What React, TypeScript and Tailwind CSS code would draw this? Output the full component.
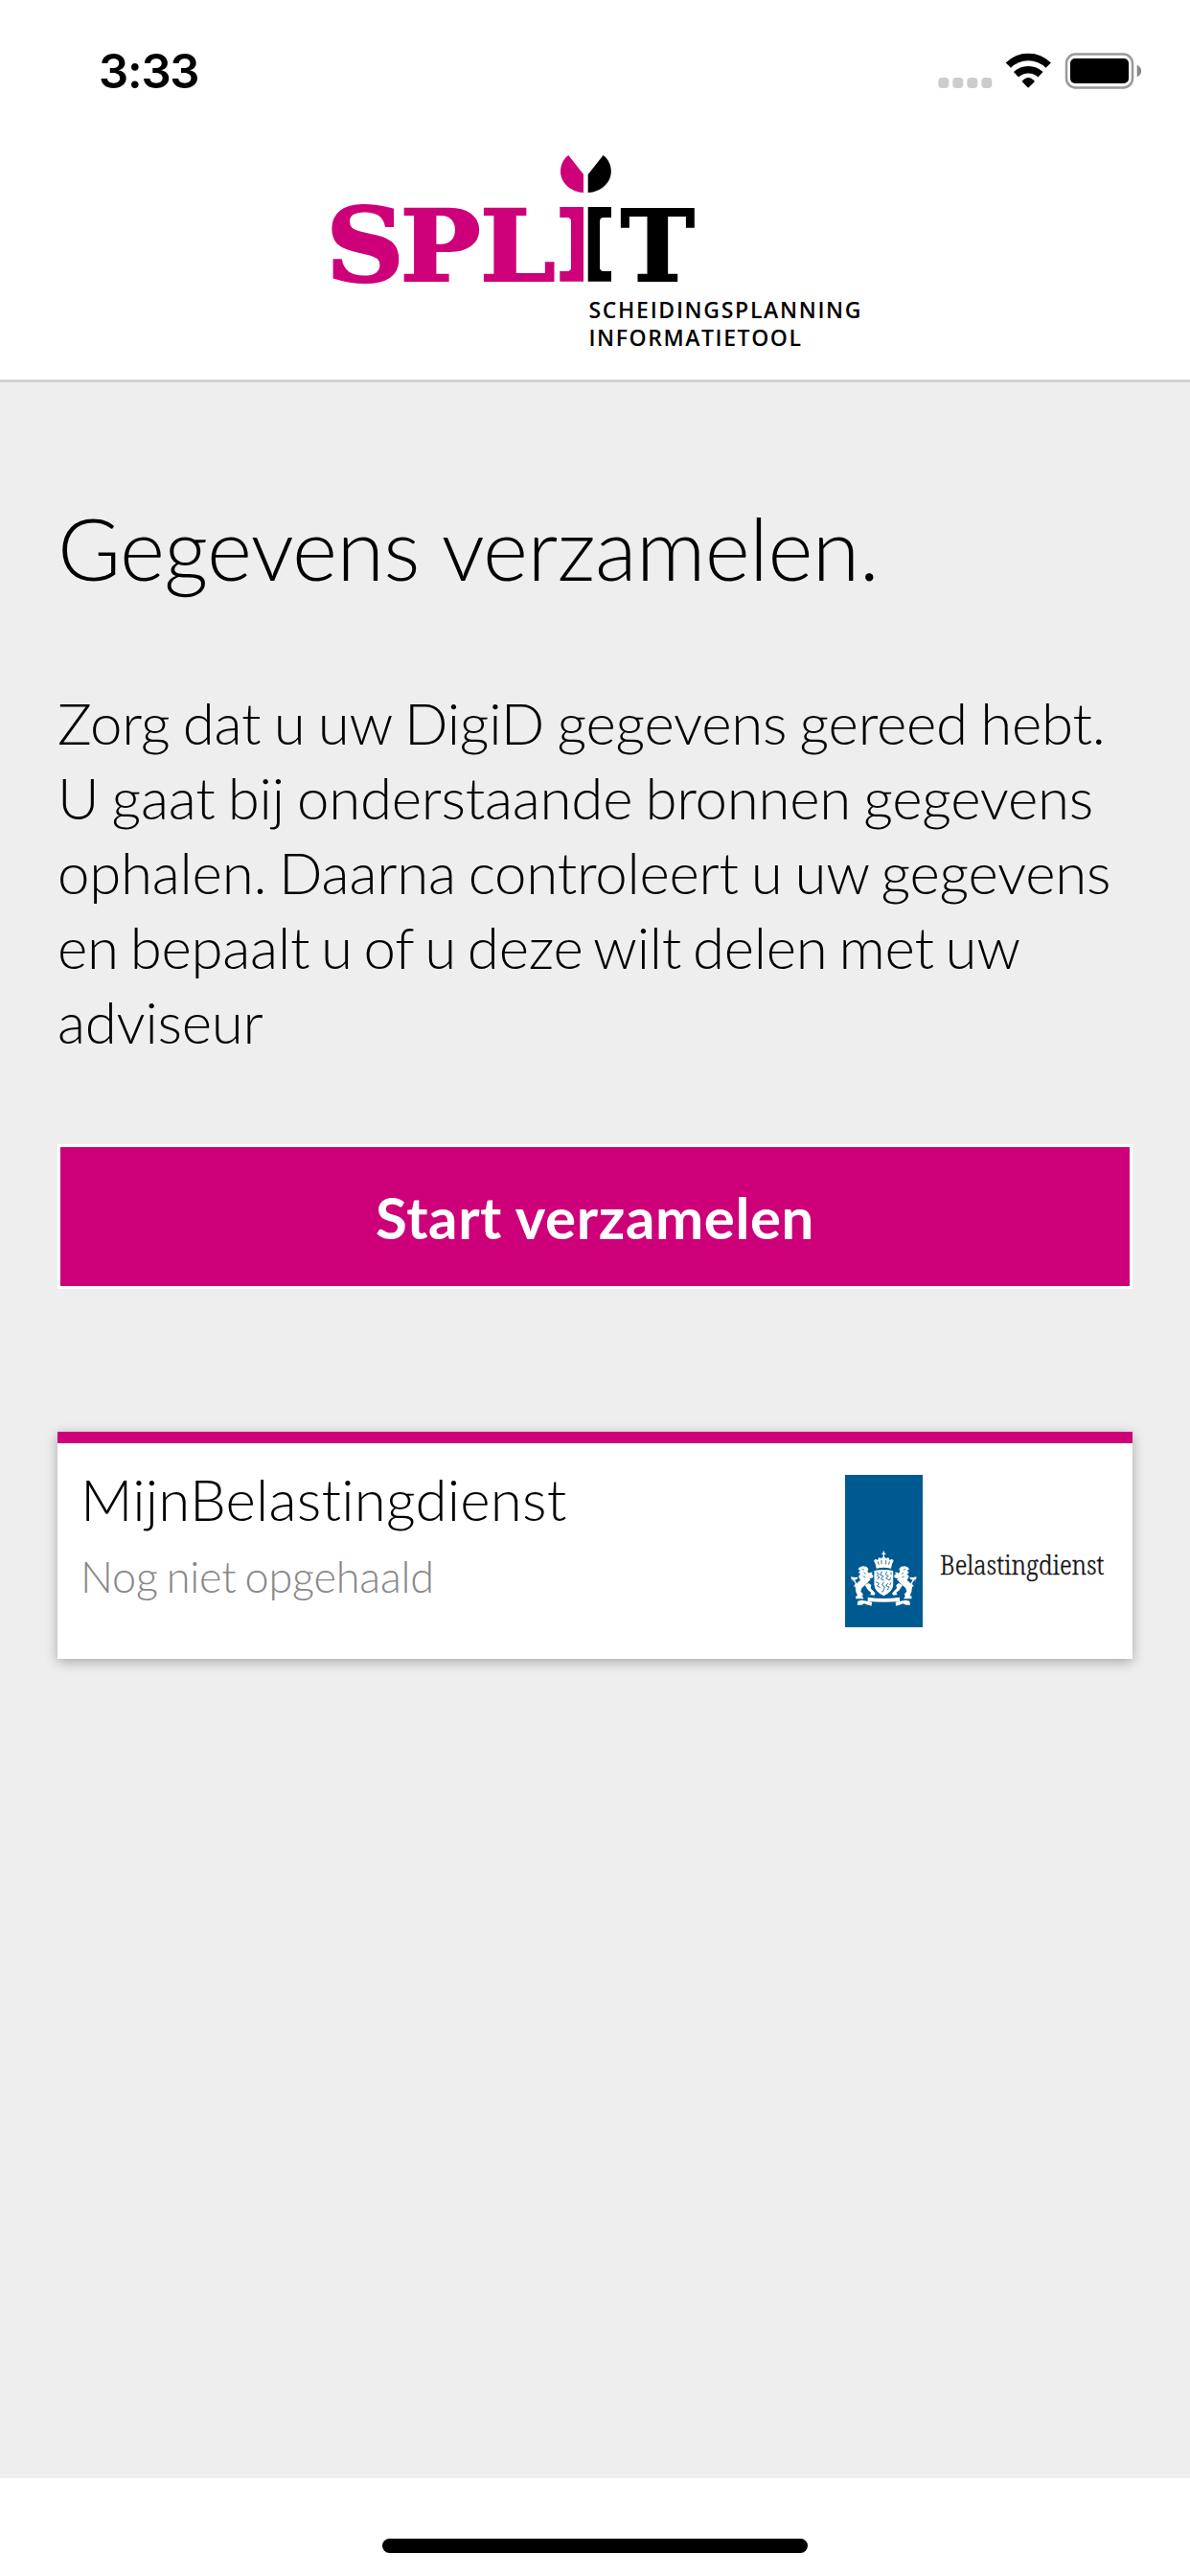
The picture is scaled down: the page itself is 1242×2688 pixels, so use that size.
import React from "react";

function StatusBar() {
  return (
    <div className="flex h-[132px] items-start justify-between pr-[50px] pl-[103px]">
      <div className="mt-[47px] font-['Inter',sans-serif] text-[49px] leading-[56px] font-semibold tracking-[-1.2px]">
        3:33
      </div>
      <svg className="mt-[48px]" width="217" height="52" viewBox="975 48 217 52">
        <g fill="#ccc">
          <rect x="979.3" y="81" width="11" height="11" rx="4" />
          <rect x="994.3" y="81" width="11" height="11" rx="4" />
          <rect x="1009.3" y="81" width="11" height="11" rx="4" />
          <rect x="1024.3" y="81" width="11" height="11" rx="4" />
        </g>
        <g fill="none" stroke="#000" strokeWidth="7.5">
          <path d="M1052.3 68.2A29.5 29.5 0 0 1 1094.2 68.2" />
          <path d="M1060.5 77.8A18.5 18.5 0 0 1 1086 77.8" />
        </g>
        <path d="M1066.5 85Q1073.2 77 1080 85L1073.2 91.7Z" />
        <rect x="1113" y="56.5" width="69" height="35" rx="9.5" fill="none" stroke="#999" strokeWidth="2.5" />
        <rect x="1117" y="61" width="61" height="26" rx="5" />
        <path d="M1186.7 67.7Q1191.2 70 1191.2 74T1186.7 80.3Z" fill="#888" />
      </svg>
    </div>
  );
}

function SplitLogo() {
  return (
    <svg width="600" height="264" viewBox="330 132 600 264">
      <g fill="#cd0079">
        <path d="M593.3 162L609 182V201C596 200.5 585 191 585 179C585 172 588 166 593.3 162Z" />
        <path d="M584.3 216H609V293.7H584.3V283H592Q596 283 596 279V231Q596 227 592 227H584.3Z" />
      </g>
      <path d="M629.6 162L613.7 182V201C626.7 200.5 637.8 191 637.8 179C637.8 172 634.8 166 629.6 162Z" />
      <path d="M638 216H613.7V293.7H638V283H630Q626 283 626 279V231Q626 227 630 227H638Z" />
      <g fontFamily="DejaVu Serif, serif" fontWeight="700" fontSize="100" strokeWidth="2">
        <g fill="#cd0079" stroke="#cd0079">
          <text transform="translate(340 293.4) scale(1.136 1.063)">S</text>
          <text transform="translate(417.6 292.7) scale(1.121 1.036)">P</text>
          <text transform="translate(500.8 292.7) scale(1.125 1.036)">L</text>
        </g>
        <text transform="translate(647.7 292.7) scale(1.036 1.036)" stroke="#000">T</text>
      </g>
      <g fontFamily="Open Sans, sans-serif" fontWeight="600" fontSize="23">
        <text x="614.5" y="332" textLength="284">SCHEIDINGSPLANNING</text>
        <text x="614.5" y="361" textLength="221.5">INFORMATIETOOL</text>
      </g>
    </svg>
  );
}

function Lion() {
  return (
    <g>
      {/* head and mane */}
      <path d="M80 107L90 103L103 104L109 112L106 119L112 127L110 138L116 146L108 150L92 151L82 144L78 134L84 128L78 122L84 116L77 113Z" />
      {/* body and hind leg */}
      <path d="M84 146L112 144L108 154L96 164L88 172L85 182L92 190L90 198L95 205H70L69 198L75 194L70 184L68 168L74 155Z" />
      {/* tail */}
      <path d="M54 136L66 138L76 137L74 143L66 146L74 158L72 168L62 166M62 166L66 162L68 156L61 147L55 142Z" />
      {/* fore paws */}
      <path d="M104 132L114 122L122 122L119 129L127 131L125 138L113 142Z" />
      <path d="M98 162L110 156L118 162L116 172L124 180L131 188L127 194L114 192L118 186L108 178Z" />
      {/* ribbon end */}
      <path d="M76 212L88 209L104 212L120 215L119 227L108 224L96 220L88 224L74 224Z" />
    </g>
  );
}

function Emblem() {
  return (
    <svg width="81" height="159" viewBox="36 -183 243 477" className="bg-[#005a92]">
      <g fill="#fff">
        <rect x="155" y="56" width="4" height="20" />
        <rect x="151" y="62" width="12" height="4" />
        <path d="M131 96L126 86L131 80L138 84L142 76L150 78L157 72L164 78L172 76L176 84L183 80L188 86L183 96L180 110Q157 104 134 110Z" />
        <Lion />
        <g transform="matrix(-1 0 0 1 314 0)">
          <Lion />
        </g>
        <path d="M127 117Q157 111 187 117V160Q187 182 157 196Q127 182 127 160Z" />
        <path d="M107 200Q157 208 207 200V213Q157 218 107 213Z" />
      </g>
      <g fill="none" stroke="#005a92" strokeWidth="2.5">
        <path d="M138 88L142 98M150 84V97M164 84V97M176 88L172 98" />
        <path d="M125 115V162Q127 184 157 198Q187 184 189 162V115" />
        <path d="M134 122L142 127L136 133L144 138L136 144M152 119L146 130L156 134L148 143L158 147M168 120L162 128L172 134L164 140L174 147L180 138M180 122V130" />
        <path d="M132 152L142 157L137 165L146 170M157 152L152 162L160 168L156 180L150 184M170 156L164 164L174 168L168 178M180 154L176 162" />
        <path d="M88 112L96 114M94 122L102 128M92 134L100 138" strokeWidth="2" />
        <path d="M226 112L218 114M220 122L212 128M222 134L214 138" strokeWidth="2" />
      </g>
    </svg>
  );
}

export default function App() {
  return (
    <div className="flex h-[2688px] w-[1242px] flex-col bg-white font-['Lato',sans-serif] font-light text-black">
      <StatusBar />
      <header className="flex h-[267px] border-b-[3px] border-[#d2d2d2] pl-[330px]">
        <SplitLogo />
      </header>
      <main className="flex h-[2187px] flex-col bg-[#eee] px-[60px]">
        <h1 className="mt-[118px] text-[90px] leading-[108px] font-light tracking-[-0.6px] [word-spacing:1px]">
          Gegevens verzamelen.
        </h1>
        <p className="mt-[90px] flex flex-col text-[60px] leading-[78px] tracking-[-0.25px] whitespace-nowrap">
          <span className="[word-spacing:-2.7px]">Zorg dat u uw DigiD gegevens gereed hebt.</span>
          <span className="[word-spacing:-2.8px]">U gaat bij onderstaande bronnen gegevens</span>
          <span className="[word-spacing:-3.1px]">ophalen. Daarna controleert u uw gegevens</span>
          <span className="[word-spacing:-4.2px]">en bepaalt u of u deze wilt delen met uw</span>
          <span>adviseur</span>
        </p>
        <button className="mt-[89px] h-[151px] border-[3px] border-white bg-[#cd0079] text-[60px] leading-[72px] font-bold tracking-[0.6px] text-white">
          Start verzamelen
        </button>
        <section className="mt-[149px] flex h-[237px] justify-between border-t-[12px] border-[#cd0079] bg-white pr-[28px] pl-[24px] shadow-[0_3px_12px_rgba(0,0,0,0.3)]">
          <div className="flex flex-col">
            <h2 className="mt-[22px] text-[60px] leading-[72px] tracking-[0.2px] [font-variant-ligatures:none]">
              MijnBelastingdienst
            </h2>
            <div className="mt-[18px] text-[45px] leading-[54px] tracking-[-0.2px] text-[#888] [word-spacing:-3px]">
              Nog niet opgehaald
            </div>
          </div>
          <div className="mt-[33px] flex gap-[17px]">
            <Emblem />
            <svg className="overflow-visible" width="174" height="159" fontFamily="Noto Serif, DejaVu Serif, serif" fontSize="27">
              <text x="1" y="104" textLength="171.5" lengthAdjust="spacingAndGlyphs" fill="#111" stroke="#111" strokeWidth="0.4">
                Belastingdienst
              </text>
            </svg>
          </div>
        </section>
      </main>
      <footer className="flex h-[102px] justify-center pt-[63px]">
        <div className="h-[15px] w-[444px] rounded-full bg-black" />
      </footer>
    </div>
  );
}
